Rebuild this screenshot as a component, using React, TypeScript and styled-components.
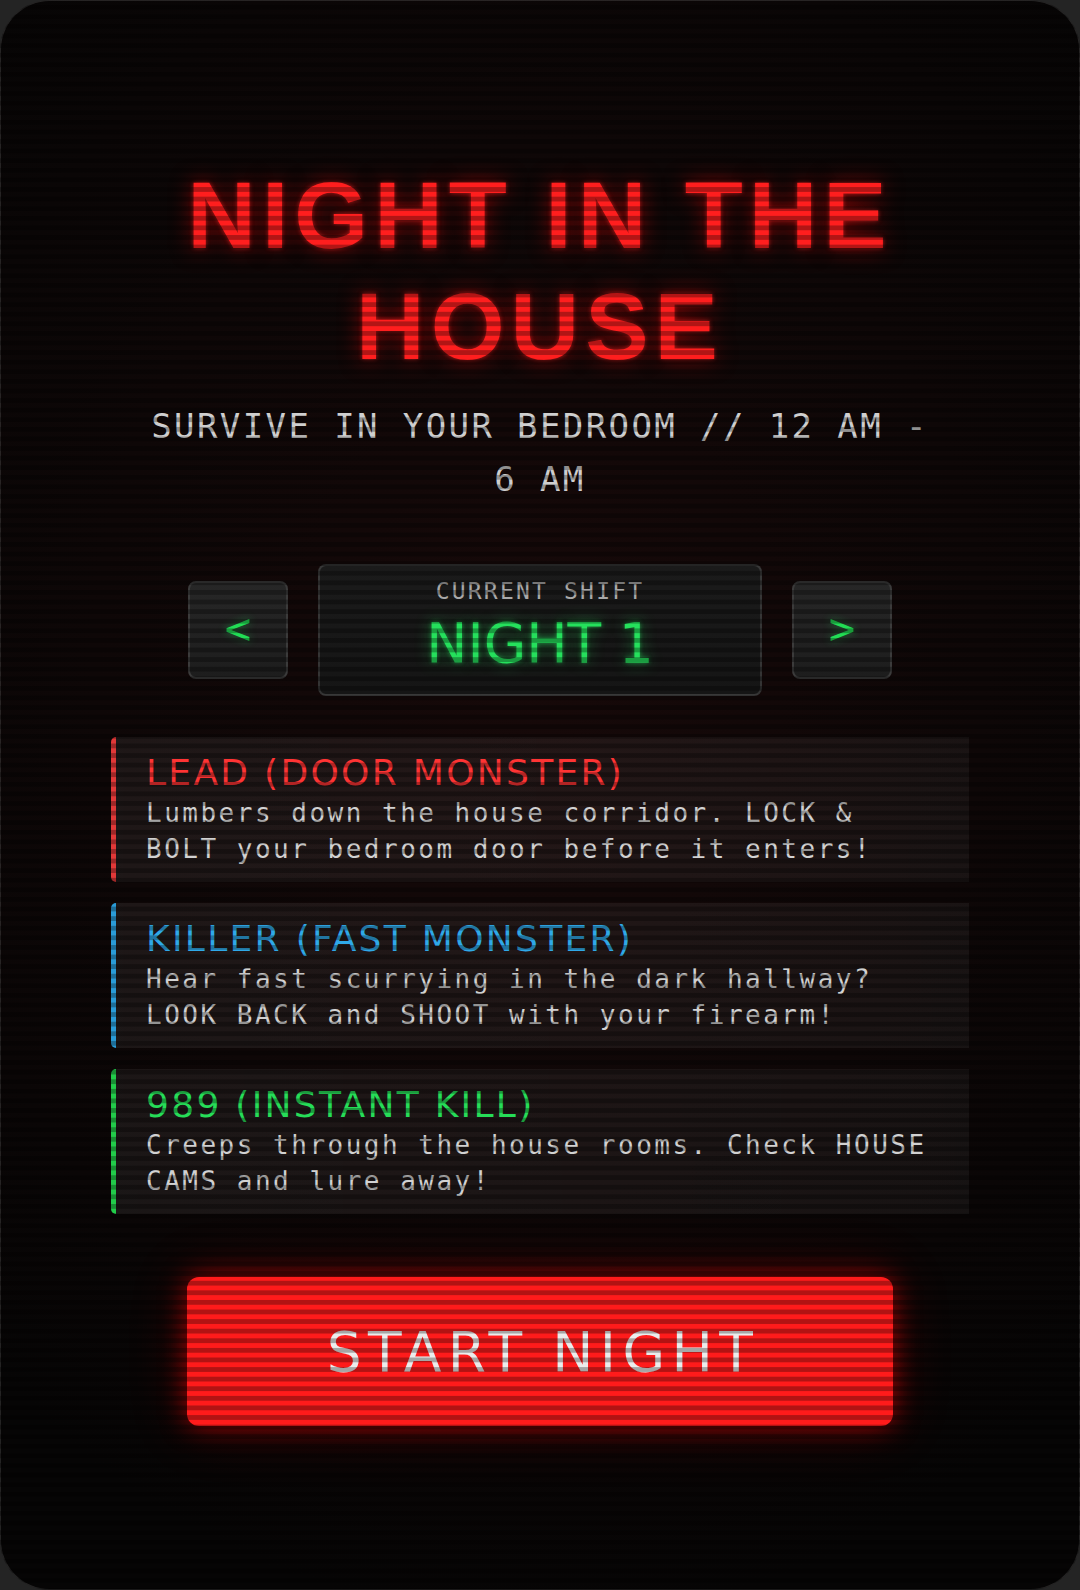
import React from 'react';
import styled, { createGlobalStyle } from 'styled-components';

const GlobalStyle = createGlobalStyle`
  html, body {
    margin: 0;
    padding: 0;
    background: #242424;
  }
  body {
    font-family: "DejaVu Sans", sans-serif;
  }
  * {
    box-sizing: border-box;
  }
`;

const sansStack = `"DejaVu Sans", "Liberation Sans", sans-serif`;
const headStack = `"Liberation Sans", Arial, sans-serif`;
const monoStack = `"DejaVu Sans Mono", "Liberation Mono", monospace`;

const Screen = styled.main`
  position: relative;
  width: 1080px;
  height: 1590px;
  border-radius: 50px;
  overflow: hidden;
  box-shadow: inset 0 0 0 1px rgba(255, 255, 255, 0.12);
  background:
    radial-gradient(ellipse 75% 60% at 50% 42%, #170909 0%, #0e0707 55%, #060505 100%);
  display: flex;
  flex-direction: column;
  align-items: center;
  padding-top: 160px;
`;

// CRT scanlines laid over the whole screen
const Scanlines = styled.div`
  position: absolute;
  inset: 0;
  pointer-events: none;
  z-index: 5;
  background: linear-gradient(to bottom, rgba(0, 0, 0, 0) 50%, rgba(0, 0, 0, 0.3) 50%);
  background-size: 100% 9.6px;
`;

const Title = styled.h1`
  margin: 0;
  width: 858px;
  font-family: ${headStack};
  font-weight: 700;
  font-size: 95px;
  line-height: 111px;
  letter-spacing: 6px;
  text-align: center;
  color: #ff1e1e;
  text-shadow: 0 0 4px rgba(255, 40, 40, 0.6), 0 0 22px rgba(255, 0, 0, 0.5);
`;

const Subtitle = styled.p`
  margin: 18px 0 0;
  max-width: 800px;
  font-family: ${monoStack};
  font-size: 34px;
  line-height: 53px;
  letter-spacing: 2.4px;
  text-align: center;
  color: #cfcfcf;
`;

const ShiftRow = styled.div`
  margin-top: 58px;
  display: flex;
  align-items: center;
  gap: 30px;
`;

const ArrowButton = styled.button`
  width: 100px;
  height: 98px;
  display: flex;
  align-items: center;
  justify-content: center;
  padding: 0 0 4px;
  border: 2px solid #3b3b3b;
  border-radius: 8px;
  background: linear-gradient(to bottom, #272727, #1d1d1d);
  color: #22dd55;
  font-family: ${monoStack};
  font-size: 44px;
  text-shadow: 0 0 8px rgba(30, 230, 90, 0.45);
  cursor: pointer;
`;

const ShiftDisplay = styled.div`
  width: 444px;
  height: 132px;
  display: flex;
  flex-direction: column;
  align-items: center;
  padding-top: 12px;
  border: 2px solid rgba(255, 255, 255, 0.13);
  border-radius: 8px;
  background: linear-gradient(to bottom, #1b1b1b, #151515);
`;

const ShiftLabel = styled.span`
  font-family: ${monoStack};
  font-size: 23px;
  letter-spacing: 2.2px;
  color: #a9a9a9;
`;

const ShiftValue = styled.span`
  margin-top: 7px;
  font-family: ${sansStack};
  font-size: 55px;
  color: #25e05c;
  text-shadow: 0 0 4px rgba(40, 240, 100, 0.5), 0 0 16px rgba(30, 230, 90, 0.45);
`;

const CardList = styled.section`
  margin-top: 41px;
  width: 858px;
  display: flex;
  flex-direction: column;
  gap: 21px;
`;

const Card = styled.article<{ $accent: string }>`
  height: 145px;
  padding: 15px 36px 0 30px;
  border-left: 5px solid ${p => p.$accent};
  border-radius: 5px 0 0 5px;
  background: linear-gradient(to right, rgba(255, 255, 255, 0.065), rgba(255, 255, 255, 0.05));
`;

const CardTitle = styled.h2<{ $color: string }>`
  margin: 0;
  font-family: ${sansStack};
  font-weight: 400;
  font-size: 36px;
  line-height: 42px;
  letter-spacing: 2.3px;
  color: ${p => p.$color};
`;

const CardText = styled.p`
  margin: 2px 0 0;
  font-family: ${monoStack};
  font-size: 26px;
  line-height: 35.5px;
  letter-spacing: 2.5px;
  color: #d2d2d2;
`;

const StartButton = styled.button`
  margin-top: 63px;
  width: 706px;
  height: 149px;
  border: none;
  border-radius: 12px;
  background: #ff1b1b;
  color: #ececec;
  font-family: ${sansStack};
  font-size: 55px;
  letter-spacing: 6.4px;
  padding: 0 0 0 6px;
  box-shadow: 0 0 26px rgba(255, 0, 0, 0.55), 0 0 60px rgba(255, 0, 0, 0.2);
  cursor: pointer;
`;

const monsters = [
  {
    name: 'LEAD (DOOR MONSTER)',
    color: '#ff3434',
    accent: '#e23838',
    text: 'Lumbers down the house corridor. LOCK & BOLT your bedroom door before it enters!',
  },
  {
    name: 'KILLER (FAST MONSTER)',
    color: '#2fa9e8',
    accent: '#2a9cd8',
    text: 'Hear fast scurrying in the dark hallway? LOOK BACK and SHOOT with your firearm!',
  },
  {
    name: '989 (INSTANT KILL)',
    color: '#26dd58',
    accent: '#22cc4a',
    text: 'Creeps through the house rooms. Check HOUSE CAMS and lure away!',
  },
];

export default function App() {
  const night = 1;

  return (
    <>
      <GlobalStyle />
      <Screen>
        <Title>NIGHT IN THE HOUSE</Title>
        <Subtitle>SURVIVE IN YOUR BEDROOM // 12 AM - 6 AM</Subtitle>

        <ShiftRow>
          <ArrowButton>&lt;</ArrowButton>
          <ShiftDisplay>
            <ShiftLabel>CURRENT SHIFT</ShiftLabel>
            <ShiftValue>NIGHT {night}</ShiftValue>
          </ShiftDisplay>
          <ArrowButton>&gt;</ArrowButton>
        </ShiftRow>

        <CardList>
          {monsters.map(m => (
            <Card key={m.name} $accent={m.accent}>
              <CardTitle $color={m.color}>{m.name}</CardTitle>
              <CardText>{m.text}</CardText>
            </Card>
          ))}
        </CardList>

        <StartButton>START NIGHT</StartButton>
        <Scanlines />
      </Screen>
    </>
  );
}
